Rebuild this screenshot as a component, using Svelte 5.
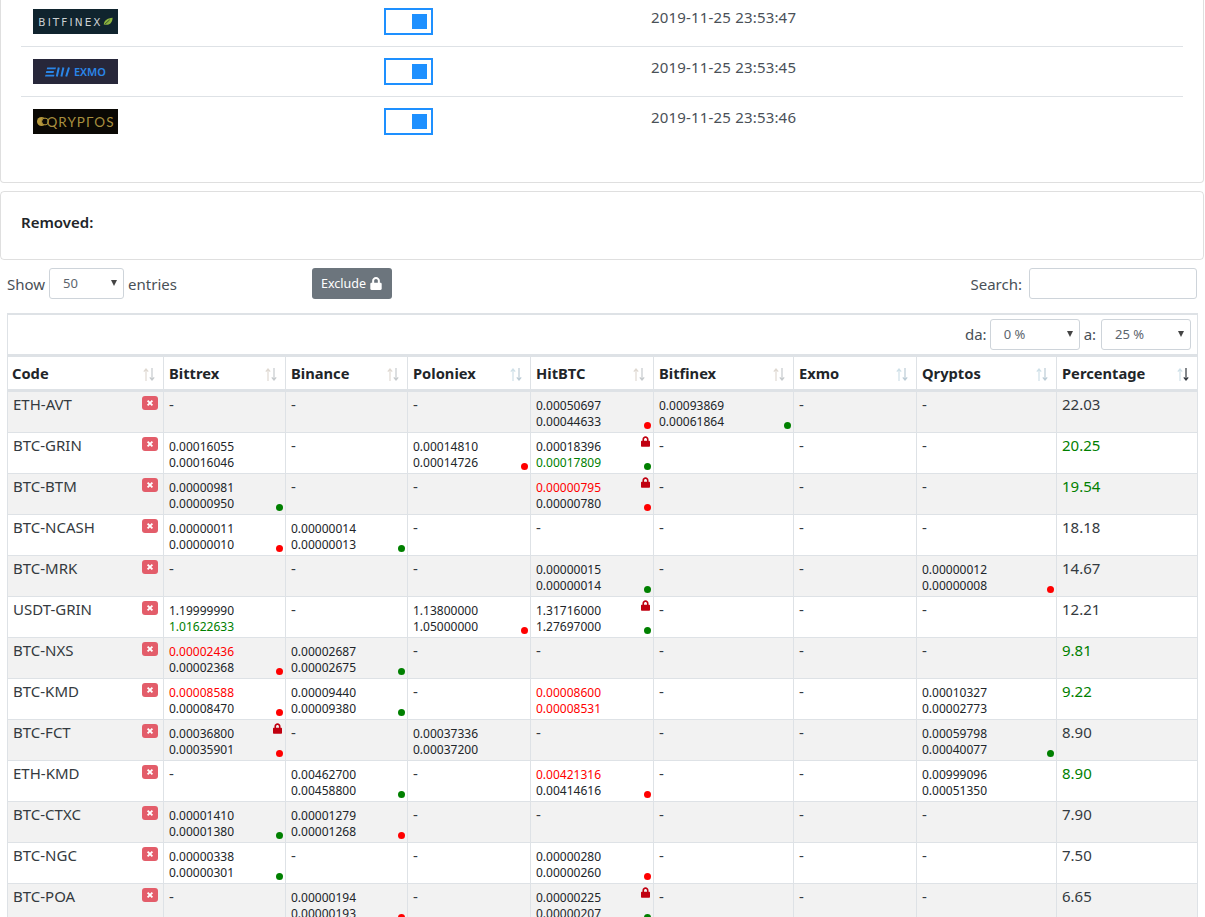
<script>
    const exchanges = [
        { name: "bitfinex", date: "2019-11-25 23:53:47" },
        { name: "exmo", date: "2019-11-25 23:53:45" },
        { name: "qryptos", date: "2019-11-25 23:53:46" },
    ];

    const columns = [
        { label: "Code" },
        { label: "Bittrex" },
        { label: "Binance" },
        { label: "Poloniex", blue: true },
        { label: "HitBTC" },
        { label: "Bitfinex" },
        { label: "Exmo", blue: true },
        { label: "Qryptos", blue: true },
        { label: "Percentage", blue: true, active: true },
    ];

    // cell: [high, low, dot, lock, highColor, lowColor]
    const R = "red";
    const G = "green";
    const rows = [
        { code: "ETH-AVT", cells: [null, null, null, ["0.00050697", "0.00044633", R], ["0.00093869", "0.00061864", G], null, null], pct: "22.03" },
        { code: "BTC-GRIN", cells: [["0.00016055", "0.00016046"], null, ["0.00014810", "0.00014726", R], ["0.00018396", "0.00017809", G, true, null, G], null, null, null], pct: "20.25", pctColor: G },
        { code: "BTC-BTM", cells: [["0.00000981", "0.00000950", G], null, null, ["0.00000795", "0.00000780", R, true, R], null, null, null], pct: "19.54", pctColor: G },
        { code: "BTC-NCASH", cells: [["0.00000011", "0.00000010", R], ["0.00000014", "0.00000013", G], null, null, null, null, null], pct: "18.18" },
        { code: "BTC-MRK", cells: [null, null, null, ["0.00000015", "0.00000014", G], null, null, ["0.00000012", "0.00000008", R]], pct: "14.67" },
        { code: "USDT-GRIN", cells: [["1.19999990", "1.01622633", null, false, null, G], null, ["1.13800000", "1.05000000", R], ["1.31716000", "1.27697000", G, true], null, null, null], pct: "12.21" },
        { code: "BTC-NXS", cells: [["0.00002436", "0.00002368", R, false, R], ["0.00002687", "0.00002675", G], null, null, null, null, null], pct: "9.81", pctColor: G },
        { code: "BTC-KMD", cells: [["0.00008588", "0.00008470", R, false, R], ["0.00009440", "0.00009380", G], null, ["0.00008600", "0.00008531", null, false, R, R], null, null, ["0.00010327", "0.00002773"]], pct: "9.22", pctColor: G },
        { code: "BTC-FCT", cells: [["0.00036800", "0.00035901", R, true], null, ["0.00037336", "0.00037200"], null, null, null, ["0.00059798", "0.00040077", G]], pct: "8.90" },
        { code: "ETH-KMD", cells: [null, ["0.00462700", "0.00458800", G], null, ["0.00421316", "0.00414616", R, false, R], null, null, ["0.00999096", "0.00051350"]], pct: "8.90", pctColor: G },
        { code: "BTC-CTXC", cells: [["0.00001410", "0.00001380", G], ["0.00001279", "0.00001268", R], null, null, null, null, null], pct: "7.90" },
        { code: "BTC-NGC", cells: [["0.00000338", "0.00000301", G], null, null, ["0.00000280", "0.00000260", R], null, null, null], pct: "7.50" },
        { code: "BTC-POA", cells: [null, ["0.00000194", "0.00000193", R], null, ["0.00000225", "0.00000207", G, true], null, null, null], pct: "6.65" },
    ];
</script>

{#snippet lock(cls)}
    <svg class={cls} viewBox="0 0 448 512" aria-hidden="true"><path d="M400 224h-24v-72C376 68.200 307.800 0 224 0S72 68.200 72 152v72H48c-26.500 0-48 21.500-48 48v192c0 26.500 21.500 48 48 48h352c26.500 0 48-21.500 48-48V272c0-26.500-21.500-48-48-48zm-104 0H152v-72c0-39.700 32.300-72 72-72s72 32.300 72 72v72z"/></svg>
{/snippet}

<div class="page">
    <div class="card exchanges">
        {#each exchanges as ex}
            <div class="ex-row">
                <div class="logo-cell">
                    <div class="logo {ex.name}">
                        {#if ex.name === "bitfinex"}
                            <span>BITFINEX</span>
                            <svg class="leaf" viewBox="0 0 12 10"><path d="M1 9C1 4 5 1 11.500 .5 11.500 6 8 9.800 3 8.800Z" fill="#8cb33e"/><path d="M2 8.500 8 3" stroke="#10242e" stroke-width="0.800"/></svg>
                        {:else if ex.name === "exmo"}
                            <svg class="exmo-mark" viewBox="0 0 25 10">
                                <path d="M2.200 .5h8.800l-.5 1.800H1.700zM1.300 4.100h7.700l-.5 1.800H.8zM.5 7.700h9l-.5 1.800H0z" fill="#2a86e8"/>
                                <path d="M13.800 .5 11.800 9.500M18.400 .5 16.400 9.500M24 .5 21.200 9.500" stroke="#2a86e8" stroke-width="2" fill="none"/>
                            </svg>
                            <span>EXMO</span>
                        {:else}
                            <svg class="q-mark" viewBox="0 0 12 11"><circle cx="4.500" cy="5.500" r="4.500" fill="#b5983c"/><circle cx="8" cy="5.500" r="3.400" fill="#0a0804" stroke="#b5983c" stroke-width="1"/></svg>
                            <span>QRYPΓOS</span>
                        {/if}
                    </div>
                </div>
                <div class="toggle-cell">
                    <div class="toggle"><div class="knob"></div></div>
                </div>
                <div class="date">{ex.date}</div>
            </div>
        {/each}
    </div>

    <div class="card removed">
        <b>Removed:</b>
    </div>

    <div class="controls">
        <div class="length">
            <span>Show</span>
            <div class="select len-select">50<i class="caret"></i></div>
            <span>entries</span>
        </div>
        <button class="exclude" type="button">Exclude {@render lock("btn-lock")}</button>
        <div class="search">
            <span>Search:</span>
            <input type="text" />
        </div>
    </div>

    <div class="table-wrap">
        <table>
            <colgroup>
                <col style="width: 156px" />
                <col style="width: 122px" />
                <col style="width: 122px" />
                <col style="width: 123px" />
                <col style="width: 123px" />
                <col style="width: 140px" />
                <col style="width: 123px" />
                <col style="width: 140px" />
                <col style="width: 141px" />
            </colgroup>
            <thead>
                <tr class="tools">
                    <th colspan="9">
                        <div class="range">
                            <span class="da">da:</span>
                            <div class="select range-select">0 %<i class="caret"></i></div>
                            <span class="a">a:</span>
                            <div class="select range-select">25 %<i class="caret"></i></div>
                        </div>
                    </th>
                </tr>
                <tr class="heads">
                    {#each columns as col}
                        <th>
                            {col.label}
                            <svg class="sort" class:blue={col.blue} class:active={col.active} viewBox="0 0 12 13" aria-hidden="true">
                                <path class="up" d="M3 13V1M.8 3.600 3 1l2.200 2.600" />
                                <path class="down" d="M9 0v12M6.800 9.400 9 12l2.200-2.600" />
                            </svg>
                        </th>
                    {/each}
                </tr>
            </thead>
            <tbody>
                {#each rows as row}
                    <tr>
                        <td class="code">
                            {row.code}
                            <span class="remove"><svg viewBox="0 0 10 10"><path d="M2 2l6 6M8 2l-6 6" stroke="#fff" stroke-width="2.400"/></svg></span>
                        </td>
                        {#each row.cells as cell}
                            {#if cell}
                                <td class="price">
                                    <div class="val {cell[4] ?? ''}">{cell[0]}</div>
                                    <div class="val {cell[5] ?? ''}">{cell[1]}</div>
                                    {#if cell[3]}{@render lock("cell-lock")}{/if}
                                    {#if cell[2]}<span class="dot {cell[2]}"></span>{/if}
                                </td>
                            {:else}
                                <td>-</td>
                            {/if}
                        {/each}
                        <td class={row.pctColor ?? ""}>{row.pct}</td>
                    </tr>
                {/each}
            </tbody>
        </table>
    </div>
</div>

<style>
    :global(html),
    :global(body) {
        overflow: hidden;
    }

    .page {
        height: 917px;
        overflow: hidden;
        font-family: "Noto Sans", "Open Sans", sans-serif;
        font-size: 15px;
        color: #212529;
        background: #fff;
    }

    .card {
        width: 1204px;
        box-sizing: border-box;
        border: 1px solid rgba(0, 0, 0, 0.125);
        border-radius: 4px;
    }

    .exchanges {
        border-top: none;
        border-top-left-radius: 0;
        border-top-right-radius: 0;
        height: 183px;
        padding: 0 20px;
        margin-bottom: 8px;
    }

    .ex-row {
        display: flex;
        height: 50px;
        border-bottom: 1px solid #dee2e6;
        box-sizing: border-box;
    }

    .ex-row:first-child {
        height: 47px;
    }

    .ex-row:last-child {
        border-bottom: none;
    }

    .logo-cell,
    .date {
        padding-top: 12px;
    }

    .toggle-cell {
        padding-top: 11px;
    }

    .ex-row:first-child .logo-cell,
    .ex-row:first-child .date {
        padding-top: 9px;
    }

    .ex-row:first-child .toggle-cell {
        padding-top: 8px;
    }

    .logo-cell {
        width: 363px;
        padding-left: 12px;
        box-sizing: border-box;
    }

    .logo {
        width: 85px;
        height: 25px;
        display: flex;
        align-items: center;
        justify-content: center;
        overflow: hidden;
        white-space: nowrap;
    }

    .bitfinex {
        background: #10242e;
        color: #ccd1d3;
        font-family: "DejaVu Sans", sans-serif;
        font-size: 10.5px;
        letter-spacing: 2.1px;
        gap: 0;
    }

    .leaf {
        width: 10px;
        height: 9px;
    }

    .exmo {
        background: #27273a;
        color: #2a86e8;
        font-size: 11px;
        font-weight: 600;
        gap: 4px;
    }

    .exmo-mark {
        width: 25px;
        height: 10px;
    }

    .q-mark {
        width: 12px;
        height: 11px;
        margin-right: -2px;
    }

    .qryptos {
        background: #0a0804;
        color: #a88f3e;
        font-family: Lato, "Noto Sans", sans-serif;
        font-size: 13.5px;
        letter-spacing: 1px;
    }

    .toggle-cell {
        width: 267px;
        box-sizing: border-box;
    }

    .toggle {
        width: 49px;
        height: 27px;
        box-sizing: border-box;
        border: 2px solid #1e90ff;
        display: flex;
        align-items: center;
        justify-content: flex-end;
        padding-right: 4px;
    }

    .knob {
        width: 15px;
        height: 15px;
        background: #1e90ff;
    }

    .date {
        color: #495057;
        letter-spacing: 0.18px;
        line-height: 17px;
    }

    .removed {
        height: 69px;
        padding: 20px 20px;
        line-height: 20px;
    }

    .removed b {
        font-weight: 600;
    }

    .controls {
        display: flex;
        align-items: center;
        height: 31px;
        margin-top: 8px;
        padding: 0 8px 0 7px;
        width: 1205px;
        box-sizing: border-box;
        color: #495057;
    }

    .length {
        display: flex;
        align-items: center;
        gap: 4px;
        width: 305px;
    }

    .select {
        position: relative;
        box-sizing: border-box;
        height: 31px;
        border: 1px solid #ced4da;
        border-radius: 3px;
        font-size: 13px;
        line-height: 29px;
        color: #5c656d;
        background: #fff;
        text-align: left;
    }

    .len-select {
        width: 75px;
        padding-left: 13px;
    }

    .range-select {
        width: 90px;
        padding-left: 13px;
        font-weight: 400;
    }

    .caret {
        position: absolute;
        right: 6px;
        top: 11px;
        border-left: 3px solid transparent;
        border-right: 3px solid transparent;
        border-top: 6px solid #444;
    }

    .exclude {
        display: flex;
        align-items: center;
        gap: 4px;
        height: 31px;
        width: 80px;
        padding: 0 0 0 9px;
        border: none;
        border-radius: 3px;
        background: #6c757d;
        color: #fff;
        font: inherit;
        font-size: 12.5px;
    }

    .btn-lock {
        width: 12px;
        height: 13px;
        fill: #fff;
    }

    .search {
        margin-left: auto;
        display: flex;
        align-items: center;
        gap: 7px;
    }

    .search input {
        width: 168px;
        height: 31px;
        box-sizing: border-box;
        border: 1px solid #ced4da;
        border-radius: 3px;
        padding: 0;
    }

    .table-wrap {
        margin: 14px 0 0 7px;
        width: 1191px;
    }

    table {
        width: 1190px;
        table-layout: fixed;
        border-collapse: collapse;
        background: #fff;
    }

    th,
    td {
        border: 1px solid #dee2e6;
        padding: 0;
        box-sizing: border-box;
    }

    .tools th {
        height: 41px;
        border-top: 2px solid #dee2e6;
        border-bottom: 3px solid #dee2e6;
    }

    .range {
        display: flex;
        justify-content: flex-end;
        align-items: center;
        padding-right: 6px;
        font-weight: 400;
        color: #495057;
    }

    .da {
        margin-right: 3px;
    }

    .a {
        margin: 0 5px 0 4px;
    }

    .heads th {
        position: relative;
        height: 35px;
        text-align: left;
        padding-left: 5px;
        font-weight: 700;
        font-size: 14.7px;
        color: #212529;
        border-bottom: 3px solid #dee2e6;
    }

    .heads th:first-child {
        padding-left: 4px;
    }

    .sort {
        position: absolute;
        right: 8px;
        top: 11px;
        width: 12px;
        height: 13px;
        fill: none;
        stroke-width: 1.2;
    }

    .sort .up {
        stroke: #dfd9d2;
    }

    .sort .down {
        stroke: #c6cacd;
    }

    .sort.blue .up {
        stroke: #cfe0e8;
    }

    .sort.blue .down {
        stroke: #bcccd6;
    }

    .sort.active .down {
        stroke: #343a40;
    }

    tbody tr {
        height: 41px;
    }

    tbody tr:first-child {
        height: 42px;
    }

    tbody tr:nth-child(odd) {
        background: #f2f2f2;
    }

    tbody td {
        position: relative;
        vertical-align: top;
        padding: 2px 5px 0;
        font-size: 15px;
        line-height: 21px;
        color: #343a40;
    }

    .remove {
        position: absolute;
        right: 5px;
        top: 4px;
        width: 16px;
        height: 14px;
        border-radius: 3px;
        background: #e35d6a;
        display: flex;
        align-items: center;
        justify-content: center;
    }

    .remove svg {
        width: 8px;
        height: 8px;
    }

    tbody td.price {
        padding: 6px 5px 0;
    }

    .val {
        font-size: 12px;
        line-height: 16px;
        color: #212529;
    }

    .cell-lock {
        position: absolute;
        right: 3px;
        top: 3px;
        width: 9px;
        height: 11px;
        fill: #c00010;
    }

    .dot {
        position: absolute;
        right: 2px;
        bottom: 3px;
        width: 7px;
        height: 7px;
        border-radius: 50%;
    }

    .dot.red {
        background: #ff0000;
    }

    .dot.green {
        background: #008000;
    }

    .val.red {
        color: #ff0000;
    }

    .val.green,
    td.green {
        color: #008000;
    }
</style>
